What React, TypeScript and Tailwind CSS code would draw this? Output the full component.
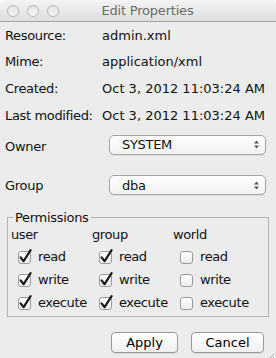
const info = [
  { label: "Resource:", value: "admin.xml" },
  { label: "Mime:", value: "application/xml" },
  { label: "Created:", value: "Oct 3, 2012 11:03:24 AM" },
  { label: "Last modified:", value: "Oct 3, 2012 11:03:24 AM" },
];

const perms = [
  { name: "user", read: true, write: true, execute: true },
  { name: "group", read: true, write: true, execute: true },
  { name: "world", read: false, write: false, execute: false },
];

function Light() {
  return (
    <span className="block w-[12px] h-[12px] rounded-full border border-[#b4b4b4] bg-gradient-to-b from-[#e4e4e4] to-[#f6f6f6]" />
  );
}

function Check({ on }: { on: boolean }) {
  return (
    <svg width="15" height="15" viewBox="0 0 15 15" className="shrink-0">
      <defs>
        <linearGradient id="cbg" x1="0" y1="0" x2="0" y2="1">
          <stop offset="0" stopColor="#ffffff" />
          <stop offset="1" stopColor="#ececec" />
        </linearGradient>
      </defs>
      <rect x="0.5" y="2.5" width="12" height="12" rx="2.5" fill="url(#cbg)" stroke="#9a9a9a" />
      {on && (
        <path d="M2.6 8.4 L5.6 12.2 L12.6 1.2" fill="none" stroke="#1a1a1a" strokeWidth="2.2" strokeLinecap="round" strokeLinejoin="round" />
      )}
    </svg>
  );
}

function Combo({ value }: { value: string }) {
  return (
    <div className="w-[157px] h-[20px] flex items-center justify-between pl-[12px] pr-[5px] rounded-[5px] border border-[#a3a3a3] bg-gradient-to-b from-[#ffffff] to-[#f1f1f1] shadow-[0_1px_0_rgba(0,0,0,0.06)]">
      <span className="leading-none tracking-[-0.3px]">{value}</span>
      <svg width="7" height="11" viewBox="0 0 7 11">
        <path d="M1 4.5 L3.5 1.5 L6 4.5 Z" fill="#555" />
        <path d="M1 6.5 L3.5 9.5 L6 6.5 Z" fill="#555" />
      </svg>
    </div>
  );
}

function Button({ label, width }: { label: string; width: string }) {
  return (
    <button className={`${width} h-[21px] rounded-[4px] border border-[#9a9a9a] bg-gradient-to-b from-[#ffffff] to-[#f0f0f0] shadow-[0_1px_0_rgba(0,0,0,0.08)] leading-none text-black`}>
      {label}
    </button>
  );
}

export default function App() {
  return (
    <div className="w-[276px] h-[358px] flex flex-col overflow-hidden rounded-t-[5px] bg-[#ececec] text-[13px] text-[#111] font-['DejaVu_Sans',sans-serif]">
      <div className="h-[22px] shrink-0 border-b border-[#a2a2a2] bg-gradient-to-b from-[#f4f4f4] to-[#dedede] flex items-center">
        <div className="flex gap-[8px] pl-[7px]">
          <Light />
          <Light />
          <Light />
        </div>
        <div className="flex-1 text-center text-[#6a6a6a] -ml-[40px] tracking-[-0.2px]">Edit Properties</div>
      </div>

      <div className="flex flex-col">
        {info.map((row) => (
          <div key={row.label} className="h-[26.7px] flex items-center">
            <span className="w-[102px] pl-[5px] shrink-0 tracking-[-0.35px]">{row.label}</span>
            <span className="whitespace-nowrap">{row.value}</span>
          </div>
        ))}
      </div>

      <div className="mt-[4px] flex items-center">
        <span className="w-[109px] pl-[5px] pt-[4px] tracking-[-0.3px]">Owner</span>
        <Combo value="SYSTEM" />
      </div>
      <div className="mt-[18px] flex items-center">
        <span className="w-[109px] pl-[5px] pt-[2px] tracking-[-0.3px]">Group</span>
        <Combo value="dba" />
      </div>

      <fieldset className="mt-[14px] ml-[7px] w-[262px] border border-[#b3b3b3] pl-[3px] pb-[2px]">
        <legend className="ml-[2px] px-[2px] leading-[15px] tracking-[-0.3px]">Permissions</legend>
        <div className="grid grid-cols-[81px_81px_81px] tracking-[-0.4px]">
          {perms.map((p) => (
            <div key={p.name} className="flex flex-col">
              <div className="h-[20px] flex items-center">{p.name}</div>
              {(["read", "write", "execute"] as const).map((k) => (
                <div key={k} className="h-[23px] flex items-center pl-[7px] gap-[5px]">
                  <Check on={p[k]} />
                  <span>{k}</span>
                </div>
              ))}
            </div>
          ))}
        </div>
      </fieldset>

      <div className="mt-[15px] flex justify-end gap-[13px] pr-[12px]">
        <Button label="Apply" width="w-[67px]" />
        <Button label="Cancel" width="w-[73px]" />
      </div>

      <div className="flex-1 flex justify-end items-end pr-[1px] pb-[1px]">
        <svg width="9" height="9" viewBox="0 0 9 9">
          <path d="M1 8 L8 1 M4 8 L8 4 M7 8 L8 7" stroke="#a8a8a8" strokeWidth="1" />
        </svg>
      </div>
    </div>
  );
}
